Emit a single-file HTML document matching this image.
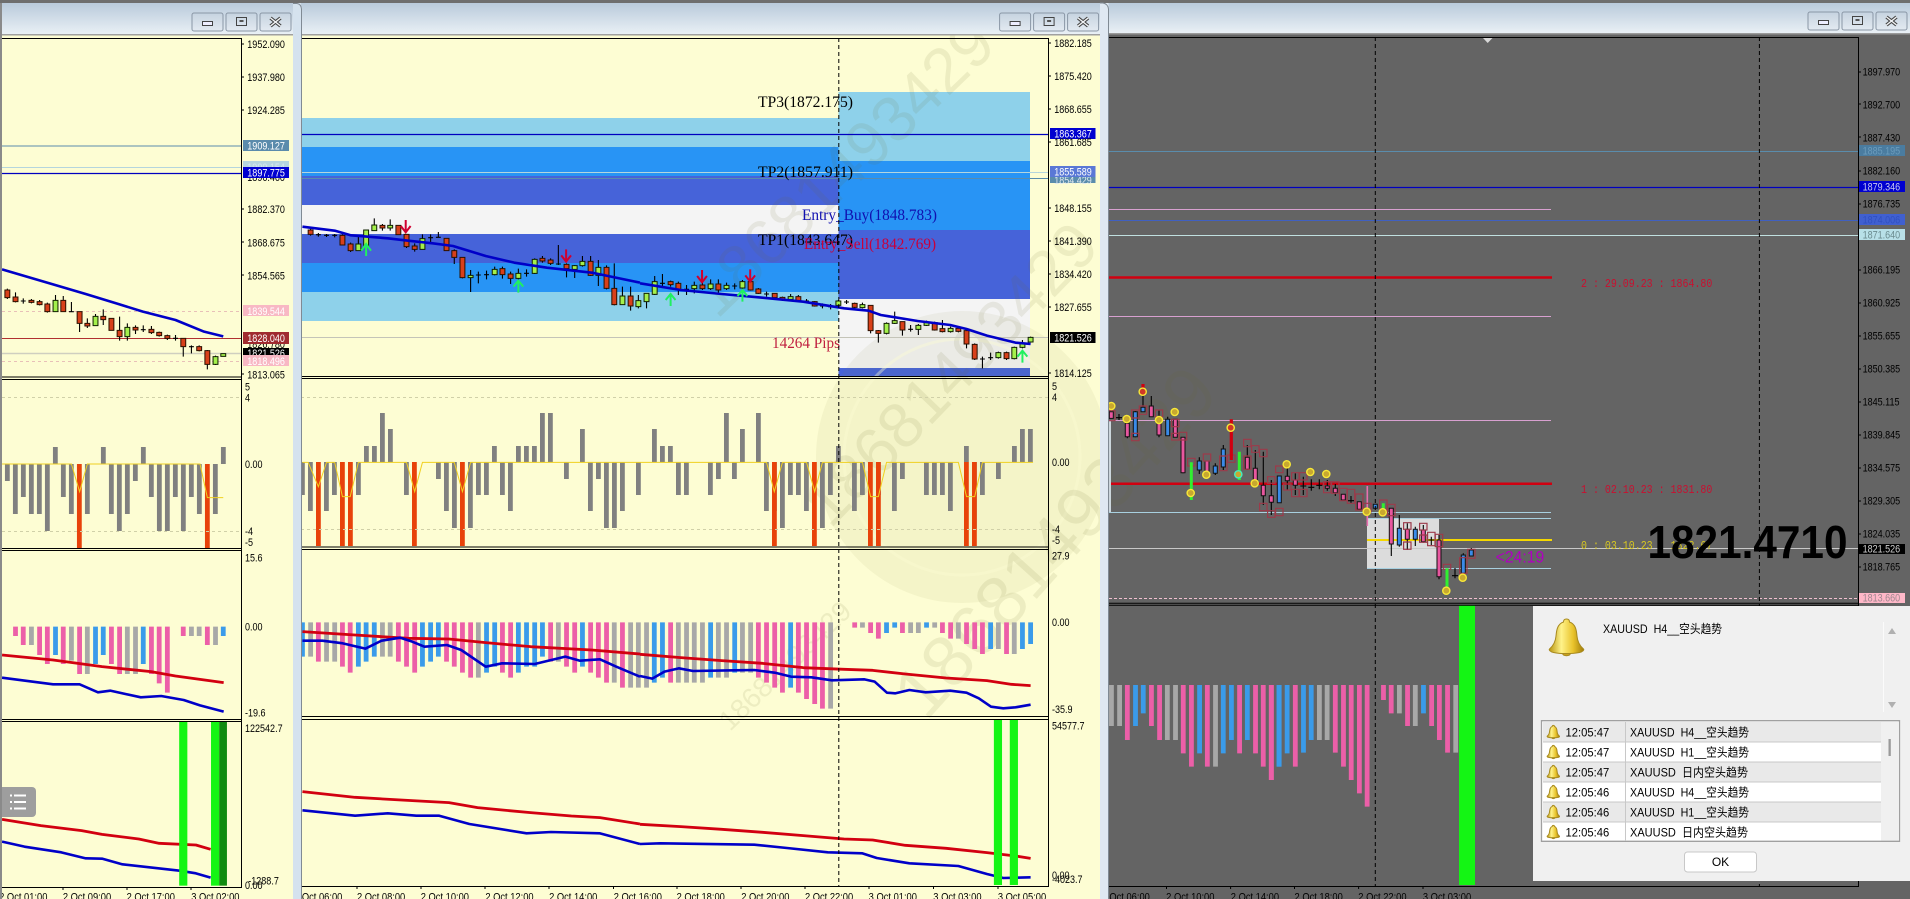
<!DOCTYPE html>
<html><head><meta charset="utf-8"><title>XAUUSD charts</title>
<style>
html,body{margin:0;padding:0;background:#646464;width:1910px;height:899px;overflow:hidden}
svg{display:block;font:11px "Liberation Sans","Noto Sans CJK SC",sans-serif}
svg path,svg line,svg polyline,svg rect{vector-effect:non-scaling-stroke}
.n{fill:none}
.w{fill:none;stroke:#000;stroke-width:1.1}
.rb{fill:#d8401a;stroke:#2a1000;stroke-width:1}
.gb{fill:#a4f04c;stroke:#102000;stroke-width:1}
.pb{fill:#e8579f;stroke:#111;stroke-width:1}
.bb{fill:#3a8be8;stroke:#111;stroke-width:1}
.box{fill:none;stroke:#9c3a4a;stroke-width:1.2}
.ma{fill:none;stroke:#0000c8;stroke-width:2.6;stroke-linejoin:round}
.re{fill:none;stroke:#d20010;stroke-width:2.8;stroke-linejoin:round}
.gr{fill:none;stroke:#808080;stroke-width:4.8}
.or{fill:none;stroke:#e8420a;stroke-width:4.8}
.hp{fill:none;stroke:#ec5fa8;stroke-width:4.8}
.hb{fill:none;stroke:#3a9bea;stroke-width:4.8}
.hg{fill:none;stroke:#a8a8a8;stroke-width:4.8}
.ye{fill:none;stroke:#f0d020;stroke-width:1}
.ag{fill:none;stroke:#20f060;stroke-width:2}
.ar{fill:none;stroke:#d00030;stroke-width:2}
.sm{fill:#c8a830;stroke:#f8e838;stroke-width:1.4}
.wm{font-family:"Liberation Sans",sans-serif;fill:#6c6c30;opacity:.1}
.tw{fill:#fff}
.se{font-family:"Liberation Serif",serif;font-size:16px}
.mo{font-family:"Liberation Mono",monospace;font-size:12px}
</style></head><body>
<svg width="1910" height="899" viewBox="0 0 1910 899" xmlns="http://www.w3.org/2000/svg">
<defs>
<linearGradient id="tg" x1="0" y1="0" x2="0" y2="1"><stop offset="0" stop-color="#b9cadb"/><stop offset="1" stop-color="#e9f0f5"/></linearGradient>
<linearGradient id="bg" x1="0" y1="0" x2="0" y2="1"><stop offset="0" stop-color="#c6d3e0"/><stop offset="1" stop-color="#e3eaf1"/></linearGradient>
<linearGradient id="gd" x1="0" y1="0" x2="1" y2="0"><stop offset="0" stop-color="#b89410"/><stop offset=".35" stop-color="#fff38a"/><stop offset=".7" stop-color="#e8c22a"/><stop offset="1" stop-color="#a07c0a"/></linearGradient>
<g id="btns">
<rect x="0" y="0" width="31" height="18" rx="2" fill="url(#bg)" stroke="#8a97a6"/>
<rect x="34" y="0" width="31" height="18" rx="2" fill="url(#bg)" stroke="#8a97a6"/>
<rect x="68" y="0" width="31" height="18" rx="2" fill="url(#bg)" stroke="#8a97a6"/>
<rect x="10.5" y="8.5" width="10" height="4" fill="#eef" stroke="#444"/>
<rect x="44.5" y="4.5" width="10" height="8" fill="none" stroke="#444"/><rect x="47.5" y="7" width="4" height="2" fill="#555"/>
<path d="M78.5 5L88.5 13M88.5 5L78.5 13" stroke="#444" stroke-width="3.4" fill="none"/>
<path d="M78.5 5L88.5 13M88.5 5L78.5 13" stroke="#f4f6f8" stroke-width="1.4" fill="none"/>
</g>
<g id="bell">
<path d="M19 1c2 0 3 1 3 3 6 2 7 8 7.500 14 .5 6 3 10 6.500 13 1 1-1 3-4 3.500-8 1.500-19 1.500-26 0-3-.5-5-2.500-4-3.500 3.500-3 6-7 6.500-13C9 12 10 6 16 4c0-2 1-3 3-3z" fill="url(#gd)" stroke="#a88a20"/>
<path d="M15 35.500c1 3 7 3 8 0z" fill="#c8a020" stroke="#a88a20"/>
</g>
</defs>

<!-- backgrounds -->
<rect x="0" y="0" width="1910" height="899" fill="#646464"/>
<rect x="1109" y="0" width="801" height="899" fill="#646464"/>
<rect x="0" y="0" width="301" height="899" fill="#fdfdd3"/>
<rect x="301" y="0" width="808" height="899" fill="#fdfdd3"/>

<!-- left window lines -->
<path d="M2 146H241" stroke="#5b8bac" stroke-width="1"/>
<path d="M2 167.500H241" stroke="#b5d5dd" stroke-width="1"/>
<path d="M2 173.500H241" stroke="#0000c0" stroke-width="1.300"/>
<path d="M2 311.500H241" stroke="#e8c0b8" stroke-dasharray="3 3"/>
<path d="M2 338.500H241" stroke="#b03030" stroke-width="1"/>
<path d="M2 353.500H241" stroke="#cfcfc0" stroke-width="1.500"/>
<path d="M2 361.500H241" stroke="#e8c0b8" stroke-dasharray="3 3"/>

<!-- mid fib zones -->
<rect x="301" y="118" width="537.500" height="29" fill="#8ed1ea"/>
<rect x="301" y="147" width="537.500" height="29" fill="#2894f5"/>
<rect x="301" y="176" width="537.500" height="29" fill="#4663d9"/>
<rect x="301" y="205" width="537.500" height="29" fill="#f4f4f4"/>
<rect x="301" y="234" width="537.500" height="29" fill="#4663d9"/>
<rect x="301" y="263" width="537.500" height="29" fill="#2894f5"/>
<rect x="301" y="292" width="537.500" height="29" fill="#8ed1ea"/>
<rect x="838.500" y="92" width="191.500" height="69" fill="#8ed1ea"/>
<rect x="838.500" y="161" width="191.500" height="69" fill="#2894f5"/>
<rect x="838.500" y="230" width="191.500" height="69" fill="#4663d9"/>
<rect x="838.500" y="299" width="191.500" height="69" fill="#f4f4f4"/>
<rect x="838.500" y="368" width="191.500" height="8" fill="#4663d9"/>

<!-- watermark -->
<ellipse cx="962" cy="457" rx="146" ry="146" fill="#80803c" opacity=".07"/>
<ellipse cx="962" cy="457" rx="118" ry="118" fill="none" stroke="#fdfdd3" stroke-width="3" opacity=".4"/>
<text class="wm" font-size="64" transform="translate(717 320) rotate(-44)">18681493429</text>
<text class="wm" font-size="64" transform="translate(830 530) rotate(-46)">18681493429</text>
<text class="wm" font-size="72" transform="translate(926 722) rotate(-48)">18681493429</text>
<text class="wm" font-size="28" transform="translate(730 732) rotate(-44)">18681493429</text>

<!-- mid horizontal lines -->
<path d="M301 134.500H1048" stroke="#0000c0" stroke-width="1.200"/>
<path d="M301 172.500H1048" stroke="#b5d5dd" stroke-width="1"/>
<path d="M301 178.500H1048" stroke="#5a8cac" stroke-width="1"/>
<path d="M301 337.500H1048" stroke="#c4c4b8" stroke-width="1"/>

<!-- mid text objects -->
<text class="se" x="758" y="107" textLength="95" lengthAdjust="spacingAndGlyphs">TP3(1872.175)</text>
<text class="se" x="758" y="177" textLength="95" lengthAdjust="spacingAndGlyphs">TP2(1857.911)</text>
<text class="se" x="758" y="245" textLength="95" lengthAdjust="spacingAndGlyphs">TP1(1843.647)</text>
<text class="se" x="802" y="220" textLength="135" lengthAdjust="spacingAndGlyphs" fill="#1010b0">Entry_Buy(1848.783)</text>
<text class="se" x="804" y="249" textLength="132" lengthAdjust="spacingAndGlyphs" fill="#c8003c">Entry_Sell(1842.769)</text>
<text class="se" x="772" y="348" textLength="68" lengthAdjust="spacingAndGlyphs" fill="#c02040">14264 Pips</text>

<!-- right window lines -->
<path d="M1109 151.500H1858" stroke="#5a8cac"/>
<path d="M1109 187.500H1858" stroke="#0000c0" stroke-width="1.300"/>
<path d="M1109 209.500H1551" stroke="#d8a0d0"/>
<path d="M1109 220.500H1858" stroke="#4060c0"/>
<path d="M1109 235.500H1858" stroke="#c0e0e0"/>
<path d="M1109 277.500H1552" stroke="#d00010" stroke-width="2.500"/>
<path d="M1109 316.500H1551" stroke="#d8a0d0"/>
<path d="M1109 420.500H1551" stroke="#d8a0d0"/>
<rect x="1367" y="519" width="72" height="49.500" fill="#dcdcdc"/>
<path d="M1109 483.700H1552" stroke="#d00010" stroke-width="2.500"/>
<path d="M1110 421V512" stroke="#ccd6dc" stroke-width="2" fill="none"/>
<path d="M1109 512.500H1551M1367 518.500H1551M1367 568.500H1551" stroke="#a8d0e0" fill="none"/>
<path d="M1367 540H1552" stroke="#f5d800" stroke-width="2"/>
<path d="M1109 548.500H1858" stroke="#c8c8c8"/>
<path d="M1109 598.500H1858" stroke="#f0c0d0" stroke-dasharray="3 2"/>
<path d="M1367.300 486V526" stroke="#e870b0" stroke-width="1.600"/>
<path d="M1483 38H1492.500L1487.700 43z" fill="#d8d8d8"/>

<!-- left candles -->
<g transform="scale(.40816 .33333)">
<path class="w" d="M18 866V897M38 877V907M57 895V911M51 903h12M77 897V910M97 900V916M116 908V938M136 885V935M155 888V935M175 906V935M169 935h12M195 935V996M214 955V984M234 942V977M253 928V975M273 955V991M293 950V1022M312 970V1022M332 976V1002M351 976V996M345 989h12M371 978V1002M390 995V1010M410 1004V1020M430 1005V1022M424 1015h12M449 1015V1070M469 1036V1060M463 1040h12M488 1036V1054M508 1050V1108M528 1067V1095"/>
<path class="rb" d="M12 870h12v23h-12zM32 891h12v14h-12zM71 901h12v6h-12zM91 905h12v9h-12zM110 912h12v23h-12zM149 901h12v34h-12zM189 935h12v35h-12zM208 970h12v8h-12zM247 949h12v10h-12zM267 955h12v36h-12zM287 991h12v19h-12zM326 982h12v8h-12zM365 988h12v10h-12zM384 997h12v10h-12zM404 1007h12v8h-12zM443 1015h12v25h-12zM482 1040h12v12h-12zM502 1052h12v41h-12z"/>
<path class="gb" d="M130 901h12v34h-12zM228 949h12v28h-12zM306 982h12v28h-12zM522 1070h12v23h-12zM541 1061h12v8h-12z"/>
<polyline class="ma" points="5,808 130,853 210,882 290,912 350,935 430,960 500,995 547,1009"/>
<!-- mid candles part 1 -->
<path class="w" d="M761 686V707M780 699V710M774 704h12M800 702V711M794 706h12M820 702V712M814 706h12M839 703V735M859 728V756M878 705V752M897 690V768M917 655V692M937 672V692M956 658V692M976 676V704M996 703V744M1016 730V755M1035 703V748M1055 703V730M1049 713h12M1074 696V712M1068 712h12M1094 715V752M1113 748V792M1133 772V835M1153 810V876M1172 815V850M1166 825h12M1192 812V838M1186 824h12M1212 800V826M1231 800V836M1251 815V852M1270 806V838M1290 808V830M1284 820h12M1310 775V822M1329 768V788M1349 775V795M1368 735V795M1362 792h12M1388 790V832M1408 795V834M1427 768V800M1447 768V828M1466 780V858M1486 796V868M1505 790V916M1525 860V914M1545 860V932M1564 885V925"/>
<path class="rb" d="M755 690h12v13h-12zM833 706h12v29h-12zM853 732h12v20h-12zM931 676h12v8h-12zM970 676h12v28h-12zM990 703h12v37h-12zM1010 738h12v10h-12zM1088 715h12v37h-12zM1107 752h12v20h-12zM1127 772h12v61h-12zM1225 806h12v18h-12zM1245 822h12v13h-12zM1323 775h12v8h-12zM1343 780h12v10h-12zM1382 793h12v13h-12zM1441 784h12v42h-12zM1480 802h12v63h-12zM1499 865h12v49h-12zM1539 888h12v30h-12z"/>
<path class="gb" d="M872 732h12v20h-12zM891 690h12v48h-12zM911 675h12v17h-12zM950 676h12v8h-12zM1029 716h12v32h-12zM1147 826h12v7h-12zM1206 808h12v16h-12zM1264 820h12v15h-12zM1304 778h12v42h-12zM1402 797h12v11h-12zM1421 784h12v13h-12zM1460 802h12v24h-12zM1519 888h12v26h-12zM1558 902h12v18h-12z"/>
<polyline class="ma" points="741,680 820,692 860,706 950,715 1000,722 1060,730 1110,738 1190,768 1260,788 1340,803 1450,818 1568,848"/>
<path class="ag" d="M897 768V735M885 752L897 732L909 752M1270 878V845M1258 860L1270 842L1282 860"/>
<path class="ar" d="M994 660V695M982 678L994 697L1006 678M1387 748V783M1375 766L1387 785L1399 766"/>
</g>
<g transform="translate(640 0) scale(.40816 .33333)">
<path class="w" d="M16 880V925M36 828V885M55 822V858M49 850h12M75 842V860M94 845V885M114 855V885M108 868h12M133 845V880M153 845V870M173 838V870M192 838V882M212 848V870M232 850V868M226 858h12M251 840V870M271 842V872M290 864V882M310 875V890M304 882h12M330 880V895M349 890V903M369 882V902M388 885V905M408 897V910M402 903h12M428 903V920M447 910V925M441 918h12M467 912V928M461 920h12M486 900V920M506 900V912M500 906h12M526 908V925M545 908V925M565 916V1000M584 990V1028M604 967V1003M624 935V972M643 965V1007M663 975V995M657 988h12M682 972V1005M702 962V978M722 965V992M741 960V997M761 980V998M780 982V997M800 985V1045M820 1030V1080M839 1070V1105M833 1077h12M859 1058V1080M853 1073h12M878 1055V1076M898 1055V1080M917 1040V1078M937 1020V1045M957 1010V1028"/>
<path class="gb" d="M10 880h12v25h-12zM30 845h12v38h-12zM127 856h12v10h-12zM167 852h12v14h-12zM206 856h12v10h-12zM245 845h12v19h-12zM363 890h12v8h-12zM480 903h12v13h-12zM539 914h12v9h-12zM598 970h12v30h-12zM618 962h12v8h-12zM676 976h12v12h-12zM696 968h12v8h-12zM755 985h12v10h-12zM872 1058h12v15h-12zM911 1042h12v34h-12zM931 1030h12v12h-12zM951 1012h12v14h-12z"/>
<path class="rb" d="M69 845h12v9h-12zM88 850h12v20h-12zM147 855h12v11h-12zM186 852h12v18h-12zM265 845h12v25h-12zM284 867h12v13h-12zM324 880h12v13h-12zM343 892h12v8h-12zM382 890h12v12h-12zM422 905h12v13h-12zM520 910h12v12h-12zM559 916h12v76h-12zM578 992h12v8h-12zM637 965h12v25h-12zM716 968h12v22h-12zM735 986h12v9h-12zM774 985h12v9h-12zM794 992h12v40h-12zM814 1033h12v44h-12zM892 1058h12v18h-12z"/>
<polyline class="ma" points="0,850 100,870 200,882 300,893 400,905 500,925 560,932 590,945 680,963 760,975 800,987 850,1007 920,1028 957,1032"/>
<path class="ag" d="M75 918V885M63 900L75 882L87 900M251 905V872M239 888L251 870L263 888M937 1088V1055M925 1070L937 1052L949 1070"/>
<path class="ar" d="M152 810V845M140 828L152 847L164 828M270 808V843M258 826L270 845L282 826"/>
</g>

<!-- right window candles -->
<g>
<path class="w" d="M1116 417.700h6M1119 414V420M1127.300 423V438.300M1135.300 411V437.300M1143 396V411.700M1151.300 396V416.700M1159 410V437.300M1167.700 416.700V435.700M1175.300 419V437.300M1183 437V473.300M1199.300 457.300V474M1207 461V472M1215.300 463.300V475M1223.300 445V470M1247.300 445V470M1255.300 450V480M1263.300 451.700V505M1271.300 480V515M1279.300 476V503M1287.300 468V490M1295.300 473.300V495M1303.300 476.700V495M1300.300 486h6M1311.300 479.300V490.700M1308.300 487.300h6M1319.300 479.300V489.300M1316.300 485.300h6M1327.300 480V490.700M1335.300 484V496M1351 496V503.300M1348 500.700h6M1391.300 508V556M1399.300 515V546.700M1407.300 523.300V550M1415.300 526.700V546M1423.300 525V542.700M1431.300 536.700V545M1428.300 540h6M1439 535V579.300M1455 568V578.300M1452 575.700h6M1463.300 553.300V574M1471.300 548V556"/>
<path class="pb" d="M1109.300 411.700h4v6.700h-4zM1125.300 423.300h4v13.400h-4zM1149.300 406h4v10.700h-4zM1157 423.300h4v11.700h-4zM1173.300 419.300h4v18h-4zM1181 437.300h4v35.400h-4zM1205 461h4v10.700h-4zM1245.300 457.300h4v12h-4zM1253.300 468.300h4v11.700h-4zM1261.300 485.300h4v10.400h-4zM1269.300 495.700h4v6.600h-4zM1285.300 476.300h4v4.400h-4zM1293.300 480h4v5.300h-4zM1325.300 486h4v2.300h-4zM1333.300 488.300h4v4.400h-4zM1341.300 494.300h4v5.700h-4zM1357.300 501.700h4v7.600h-4zM1389.300 508.300h4v35.700h-4zM1405.300 529.300h4v10h-4zM1421.300 530h4v11.700h-4zM1437 540h4v36.700h-4z"/>
<path class="bb" d="M1133.300 411.700h4v25h-4zM1141 407.300h4v4.400h-4zM1165.700 419.300h4v16.400h-4zM1197.300 461h4v9h-4zM1213.300 466h4v7.300h-4zM1221.300 449h4v18h-4zM1277.300 476h4v26.700h-4zM1373.300 504.300h4v4h-4zM1397.300 528.300h4v16.700h-4zM1413.300 529.300h4v10h-4zM1461.300 555h4v18.300h-4zM1469.300 550h4v6h-4z"/>
<path class="box" d="M1107.600 410.700h7.400v10h-7.400zM1131.600 410h7.400v8h-7.400zM1131.600 433.300h7.400v7.400h-7.400zM1139.300 406h7.400v8.300h-7.400zM1155.300 410h7.400v6.700h-7.400zM1171.600 419.300h7.400v7.400h-7.400zM1171.600 433.300h7.400v6.700h-7.400zM1179.300 432.300h7.400v7.700h-7.400zM1187.600 458.300h7.400v7.700h-7.400zM1203.300 454h7.400v7h-7.400zM1219.600 456h7.400v14.700h-7.400zM1227.600 455h7.400v7.300h-7.400zM1243.600 439.300h7.400v7.400h-7.400zM1243.600 456h7.400v13.300h-7.400zM1251.600 445.700h7.400v6.600h-7.400zM1259.600 449.300h7.400v7.400h-7.400zM1259.600 503.300h7.400v7.400h-7.400zM1267.600 476.700h7.400v6.600h-7.400zM1267.600 510.700h7.400v6.600h-7.400zM1275.600 466h7.400v6.700h-7.400zM1275.600 508.300h7.400v7.400h-7.400zM1283.600 484h7.400v6h-7.400zM1291.600 472.700h7.400v7.300h-7.400zM1291.600 489.300h7.400v7.400h-7.400zM1299.600 472.700h7.400v7.300h-7.400zM1299.600 489.300h7.400v7.400h-7.400zM1323.600 481.700h7.400v11h-7.400zM1331.600 481.700h7.400v11.600h-7.400zM1339.600 488.300h7.400v12.400h-7.400zM1347.300 489.300h7.400v14h-7.400zM1355.600 494h7.400v16h-7.400zM1363.600 503.300h7.400v8.700h-7.400zM1379.600 500h7.400v10h-7.400zM1387.600 504.300h7.400v11.400h-7.400zM1403.600 522.700h7.400v6.600h-7.400zM1403.600 542h7.400v7.300h-7.400zM1419.600 523.300h7.400v6.700h-7.400zM1419.600 535h7.400v7.300h-7.400zM1427.600 532.300h7.400v13.400h-7.400zM1435.300 534.300h7.400v12.400h-7.400zM1443.300 564.300h7.400v5h-7.400zM1459.600 557.700h7.400v15.600h-7.400zM1467.600 549.300h7.400v9h-7.400z"/>
<path d="M1191.300 462.300V500M1239.300 451.700V480M1383.300 503.300V512M1447 568.300V588.300" stroke="#30f030" stroke-width="3" fill="none"/>
<path d="M1231.300 419.300V460M1143 384V392" stroke="#d00010" stroke-width="3.200" fill="none"/>
<circle class="sm" cx="1111.300" cy="406" r="3.600"/><circle class="sm" cx="1126.700" cy="419" r="3.600"/><circle class="sm" cx="1142.700" cy="391.700" r="3.600" style="fill:#d03828"/><circle class="sm" cx="1159" cy="420" r="3.600"/><circle class="sm" cx="1174.700" cy="412" r="3.600"/><circle class="sm" cx="1230.700" cy="427.700" r="3.600" style="fill:#d03828"/><circle class="sm" cx="1190.700" cy="493" r="3.600"/><circle class="sm" cx="1206.300" cy="474.700" r="3.600"/><circle class="sm" cx="1238.300" cy="474.300" r="3.600" style="stroke:#40f0c0"/><circle class="sm" cx="1254.700" cy="483.300" r="3.600"/><circle class="sm" cx="1286.700" cy="464.300" r="3.600"/><circle class="sm" cx="1310.300" cy="472" r="3.600"/><circle class="sm" cx="1326.300" cy="474" r="3.600"/><circle class="sm" cx="1366.700" cy="511.700" r="3.600"/><circle class="sm" cx="1382.700" cy="512.300" r="3.600"/><circle class="sm" cx="1446.300" cy="590.700" r="3.600"/><circle class="sm" cx="1462.700" cy="577.700" r="3.600"/>
</g>

<!-- left pane 2 -->
<path class="gr" d="M7.350 464V481M15.350 464V514M23.350 464V497M31.350 464V514M39.350 464V514M47.350 464V531M55.350 464V447M63.350 464V497M71.350 464V514M87.350 464V514M103.350 464V447M111.350 464V514M119.350 464V531M127.350 464V514M135.350 464V481M143.350 464V447M151.350 464V497M159.350 464V531M167.350 464V531M175.350 464V497M183.350 464V531M191.350 464V497M199.350 464V514M215.350 464V514M223.350 464V447"/>
<path class="or" d="M79.350 464V548M207.350 464V548"/>
<path d="M2 397.500H241M2 531.500H241" stroke="#d0d0a8" stroke-dasharray="3 3" fill="none"/>
<g transform="translate(0 450) scale(.40816 .33333)"><path class="ye" d="M5 42H175L195 125L214 42H490L508 143H547"/>
<path class="hp" d="M38 530V558M57 530V585M97 530V615M116 530V642M155 530V642M195 530V672M273 530V642M293 530V672M371 530V672M390 530V700M410 530V728M449 530V558M508 530V585"/>
<path class="hb" d="M136 530V615M234 530V642M253 530V615M351 530V642M547 530V558"/>
<path class="hg" d="M77 530V585M175 530V632M214 530V672M312 530V672M332 530V672M469 530V558M488 530V558M528 530V585"/>
<polyline class="re" points="5,615 130,630 250,650 370,665 430,678 548,698"/>
<polyline class="ma" points="5,683 130,703 195,703 240,727 270,722 345,742 395,738 450,750 490,766 548,785"/>
<polyline class="re" points="5,1108 100,1127 200,1142 250,1153 340,1167 390,1180 480,1185 516,1198"/>
<polyline class="ma" points="5,1175 60,1190 150,1207 210,1225 250,1226 300,1243 440,1262 480,1270 516,1283"/>
<rect x="439" y="815" width="20" height="492" fill="#14f514"/><rect x="517" y="815" width="20" height="492" fill="#14f514"/><rect x="537" y="815" width="19" height="492" fill="#108a10"/>
</g>

<!-- mid pane 2 -->
<path class="gr" d="M302.400 462V495M310.400 462V511M326.400 462V511M334.400 462V495M358.400 462V495M366.400 462V446M374.400 462V446M382.400 462V413M390.400 462V429M406.400 462V495M438.400 462V479M446.400 462V511M454.400 462V528M470.400 462V528M478.400 462V495M486.400 462V495M494.400 462V446M502.400 462V495M510.400 462V511M518.400 462V446M526.400 462V446M534.400 462V446M542.400 462V413M550.400 462V413M566.400 462V479M582.400 462V429M590.400 462V511M598.400 462V479M606.400 462V528M614.400 462V528M622.400 462V511M638.400 462V495M654.400 462V429M662.400 462V446M670.400 462V446M678.400 462V495M686.400 462V495M710.400 462V495M718.400 462V479M726.400 462V413M734.400 462V479M742.400 462V429M758.400 462V413M766.400 462V511M774.400 462V511M782.400 462V528M790.400 462V495M798.400 462V495M806.400 462V511M822.400 462V528M830.400 462V495M838.400 462V446M854.400 462V511M862.400 462V495M878.400 462V495M894.400 462V511M902.400 462V479M926.400 462V495M934.400 462V495M942.400 462V495M950.400 462V511M966.400 462V446M974.400 462V528M982.400 462V495M998.400 462V479M1014.400 462V446M1022.400 462V429M1030.400 462V429"/>
<path class="or" d="M318.400 462V546M342.400 462V546M350.400 462V546M414.400 462V546M462.400 462V546M774.400 462V546M814.400 462V546M870.400 462V546M878.400 462V546M966.400 462V546M974.400 462V546"/>
<path d="M301 397.500H1048M301 529.500H1048" stroke="#d0d0a8" stroke-dasharray="3 3" fill="none"/>
<g transform="translate(0 450) scale(.40816 .33333)">
<path class="ye" d="M741 37H755L780 110L800 37H820L839 140H858L878 37H996L1016 125L1035 37H1113L1133 125L1153 37H1568"/>
<path class="hb" d="M741 517V620M878 517V650M897 517V635M917 517V620M1035 517V650M1055 517V635M1074 517V620M1192 517V668M1212 517V650M1270 517V668M1290 517V650M1310 517V650M1329 517V620M1427 517V650"/>
<path class="hg" d="M761 517V620M800 517V635M820 517V635M937 517V620M956 517V620M1172 517V683M1368 517V635M1505 517V698M1545 517V713M1564 517V713"/>
<path class="hp" d="M780 517V635M839 517V650M858 517V668M976 517V635M996 517V650M1016 517V668M1094 517V635M1113 517V650M1133 517V668M1153 517V683M1231 517V668M1251 517V683M1349 517V635M1388 517V650M1408 517V668M1447 517V668M1466 517V683M1486 517V698M1525 517V713"/>
<polyline class="re" points="741,545 870,555 1000,565 1100,567 1190,578 1300,590 1450,600 1568,612"/>
<polyline class="ma" points="741,572 790,572 840,580 895,596 935,572 980,563 1010,575 1040,590 1095,585 1130,600 1190,650 1230,640 1310,642 1385,620 1420,632 1470,628 1510,650 1568,680"/>
<polyline class="re" points="741,1025 870,1042 1010,1052 1100,1058 1170,1073 1300,1088 1400,1098 1470,1103 1568,1122"/>
<polyline class="ma" points="741,1081 870,1097 950,1090 1020,1097 1075,1097 1150,1122 1290,1150 1350,1146 1470,1150 1568,1182"/>
</g>
<g transform="translate(640 450) scale(.40816 .33333)">
<path class="ye" d="M0 37H310L329 125L349 37H408L428 125L447 37H545L565 140H584L604 37H780L800 140H820L839 37H963"/>
<path class="hb" d="M35 517V698M55 517V683M173 517V683M232 517V668M369 517V713M604 517V549M624 517V533M702 517V533M859 517V597M937 517V597M957 517V582"/>
<path class="hg" d="M16 517V713M94 517V698M114 517V698M133 517V698M153 517V698M192 517V683M212 517V683M251 517V668M271 517V668M467 517V776M545 517V533M663 517V549M682 517V549M722 517V533M780 517V566M878 517V597M917 517V612"/>
<path class="hp" d="M75 517V698M290 517V683M310 517V698M330 517V713M349 517V728M388 517V728M408 517V747M428 517V762M447 517V776M526 517V533M565 517V549M584 517V566M643 517V549M741 517V549M761 517V566M800 517V582M820 517V597M839 517V612M898 517V612"/>
<polyline class="re" points="0,613 100,623 200,632 300,640 400,653 500,658 570,661 650,672 750,684 850,692 910,703 957,707"/>
<polyline class="ma" points="0,678 30,686 60,665 95,655 130,663 230,661 280,660 330,668 370,680 420,682 470,691 550,688 575,695 605,728 625,730 660,720 700,727 760,722 800,728 830,745 860,770 890,775 920,772 957,764"/>
<polyline class="re" points="0,1123 100,1130 200,1138 300,1147 400,1157 500,1167 570,1170 650,1186 750,1195 850,1208 920,1218 957,1225"/>
<polyline class="ma" points="0,1182 50,1180 280,1184 360,1194 460,1207 545,1210 580,1224 660,1240 780,1248 850,1272 890,1284 957,1282"/>
<rect x="867" y="808" width="20" height="497" fill="#14f514"/><rect x="906" y="808" width="20" height="497" fill="#14f514"/>
<!-- right lower hist -->
<path class="hg" d="M1155 705V828M1175 705V828M1292 705V870M1312 705V870M1410 705V950"/>
<path class="hp" d="M1194 705V870M1253 705V828M1273 705V870M1331 705V910M1351 705V950M1390 705V950M1469 705V910M1508 705V910M1527 705V950M1547 705V990"/>
<path class="hb" d="M1214 705V828M1233 705V790M1371 705V910M1429 705V910M1449 705V870M1488 705V870M1566 705V950"/>
</g>
<g transform="translate(1270 450) scale(.40816 .33333)">
<path class="hp" d="M3 705V990M62 705V950M160 705V908M180 705V950M199 705V990M219 705V1030M238 705V1070M278 705V750M297 705V790M337 705V828M396 705V828M415 705V870M435 705V908"/>
<path class="hb" d="M22 705V950M42 705V910M82 705V908M101 705V870M376 705V790"/>
<path class="hg" d="M121 705V870M140 705V870M317 705V790M356 705V828M455 705V908"/>
</g>
<rect x="1459" y="605" width="16" height="280" fill="#14f514"/>

<!-- vertical dashed lines -->
<path d="M838.800 38V886M1375.300 37V886M1759.400 37V886" stroke="#000" stroke-dasharray="4 3" fill="none"/>

<!-- right window texts -->
<text class="mo" fill="#c81030" transform="translate(1581 287) scale(.83 1)" xml:space="preserve">2 : 29.09.23 : 1864.80</text>
<text class="mo" fill="#c81030" transform="translate(1581 493) scale(.83 1)" xml:space="preserve">1 : 02.10.23 : 1831.80</text>
<text class="mo" fill="#d8c820" transform="translate(1581 549) scale(.83 1)" xml:space="preserve">0 : 03.10.23 : 1822.67</text>
<text x="1647.500" y="558" font-size="46" font-weight="700" fill="#000" textLength="200" lengthAdjust="spacingAndGlyphs">1821.4710</text>
<text x="1495.700" y="562.700" font-size="17" fill="#b000c0" textLength="48.500" lengthAdjust="spacingAndGlyphs">&lt;24:19</text>

<!-- pane frames -->
<path d="M2 38.500H241M2 377H241M2 379.500H241M2 548.500H241M2 550.500H241M2 719.500H241M2 721.500H241M2 887.500H241M241.500 38V888" stroke="#000" stroke-width="1" fill="none"/>
<path d="M301 38.500H1048M301 376.500H1048M301 378.500H1048M301 547H1048M301 549.500H1048M301 716.500H1048M301 719.500H1048M301 886.500H1048M1048.500 38V887" stroke="#000" stroke-width="1" fill="none"/>
<path d="M1109 37.500H1858M1109 603.300H1858M1109 605.300H1858M1109 886.500H1858M1858.500 37V887" stroke="#000" stroke-width="1" fill="none"/>

<!-- ticks -->
<path d="M241 44h3M241 77h3M241 110h3M241 209h3M241 242h3M241 275h3M241 374h3M1048 43h3M1048 76h3M1048 109h3M1048 142h3M1048 208h3M1048 241h3M1048 274h3M1048 307h3M1048 373h3M1858 72h3M1858 104h3M1858 137h3M1858 171h3M1858 204h3M1858 270h3M1858 303h3M1858 336h3M1858 369h3M1858 402h3M1858 435h3M1858 468h3M1858 501h3M1858 534h3M1858 567h3M63 887v3M127 887v3M191 887v3M357 886v3M421 886v3M485 886v3M549 886v3M613.500 886v3M677 886v3M741 886v3M805 886v3M869 886v3M933.500 886v3M998 886v3M1166.500 886v3M1230.600 886v3M1294.500 886v3M1358.600 886v3M1423 886v3" stroke="#000" fill="none"/>

<!-- tags -->
<rect x="243" y="140" width="46" height="11" fill="#5b8bac"/>
<rect x="243" y="161" width="46" height="6" fill="#b5d5e0"/>
<g transform="translate(247.300 0) scale(.82 1)"><text y="171" fill="#d8e8ee">1900.154</text></g>
<g transform="translate(247.300 0) scale(.82 1)"><text y="181">1896.460</text></g>
<rect x="243" y="167" width="46" height="11" fill="#0000d0"/>
<rect x="243" y="305" width="46" height="11" fill="#f8b8c4"/>
<g transform="translate(247.300 0) scale(.82 1)"><text y="348">1826.780</text></g>
<rect x="243" y="332" width="46" height="12" fill="#a02a30"/>
<rect x="243" y="348" width="46" height="8" fill="#000"/>
<g transform="translate(247.300 0) scale(.82 1)"><text y="357" class="tw">1821.526</text></g>
<rect x="243" y="355" width="46" height="11" fill="#f8b8c4"/>
<rect x="1050" y="128" width="45.500" height="11" fill="#0000d0"/>
<rect x="1050" y="177" width="45.500" height="6" fill="#5a8cac"/>
<g transform="translate(1054.200 0) scale(.82 1)"><text y="184" fill="#dfe8ee">1854.429</text></g>
<rect x="1050" y="166" width="45.500" height="11" fill="#5a78d6"/>
<rect x="1050" y="332" width="45.500" height="11" fill="#000"/>
<rect x="1859" y="145" width="46" height="11" fill="#4a7ca0"/>
<rect x="1859" y="181" width="46" height="11" fill="#0000d0"/>
<rect x="1859" y="214" width="46" height="11" fill="#4060d0"/>
<rect x="1859" y="229" width="46" height="11" fill="#b8e0e8"/>
<rect x="1859" y="544" width="46" height="10" fill="#000"/>
<rect x="1859" y="593" width="46" height="10" fill="#ffb8c8"/>

<!-- axis text: left -->
<g transform="translate(247.300 0) scale(.82 1)">
<text y="48">1952.090</text><text y="81">1937.980</text><text y="114">1924.285</text>
<text y="149.500" class="tw">1909.127</text><text y="176.500" class="tw">1897.775</text>
<text y="213">1882.370</text><text y="246.500">1868.675</text><text y="279.500">1854.565</text>
<text y="315" class="tw">1839.544</text><text y="342" class="tw">1828.040</text><text y="365" class="tw">1818.496</text>
<text y="378.500">1813.065</text>
</g>
<g transform="translate(245 0) scale(.82 1)">
<text y="390.500">5</text><text y="401.500">4</text><text y="468">0.00</text><text y="535">-4</text><text y="546">-5</text>
<text y="561.700">15.6</text><text y="630.700">0.00</text><text y="716.700">-19.6</text><text y="732">122542.7</text>
<text y="889">0.00</text><text y="884.700" transform="translate(4 0)">-1288.7</text>
</g>
<!-- axis text: mid -->
<g transform="translate(1054.200 0) scale(.82 1)">
<text y="47">1882.185</text><text y="80">1875.420</text><text y="113">1868.655</text>
<text y="146">1861.685</text><text y="137.500" class="tw">1863.367</text><text y="175.500" class="tw">1855.589</text>
<text y="212">1848.155</text><text y="245">1841.390</text><text y="278">1834.420</text><text y="311">1827.655</text>
<text y="341.500" class="tw">1821.526</text><text y="377">1814.125</text>
</g>
<g transform="translate(1052 0) scale(.82 1)">
<text y="390">5</text><text y="401">4</text><text y="466">0.00</text><text y="533">-4</text><text y="544">-5</text>
<text y="559.700">27.9</text><text y="626">0.00</text><text y="713">-35.9</text><text y="729.700">54577.7</text>
<text y="879">0.00</text><text y="883">-4023.7</text>
</g>
<!-- axis text: right -->
<g transform="translate(1862.600 0) scale(.82 1)">
<text y="75.700">1897.970</text><text y="108.500">1892.700</text><text y="141.500">1887.430</text>
<text y="154.500" fill="#6c9cbc">1885.195</text><text y="174.700">1882.160</text><text y="190.500" fill="#c8c8f0">1879.346</text>
<text y="207.700">1876.735</text><text y="223.500" fill="#3050c0">1874.006</text><text y="238.500" fill="#6c8c90">1871.640</text>
<text y="273.700">1866.195</text><text y="306.700">1860.925</text><text y="339.700">1855.655</text>
<text y="372.700">1850.385</text><text y="405.700">1845.115</text><text y="438.700">1839.845</text>
<text y="471.700">1834.575</text><text y="504.700">1829.305</text><text y="537.700">1824.035</text>
<text y="552.500" class="tw" opacity=".8">1821.526</text><text y="570.700">1818.765</text><text y="601.500" fill="#a08890">1813.660</text>
</g>
<!-- time axis -->
<g transform="scale(.85 1)">
<text x="-1" y="900.500">2 Oct 01:00</text><text x="74" y="900.500">2 Oct 09:00</text><text x="149" y="900.500">2 Oct 17:00</text><text x="225" y="900.500">3 Oct 02:00</text>
<text x="346" y="900.500">2 Oct 06:00</text><text x="420" y="900.500">2 Oct 08:00</text><text x="495" y="900.500">2 Oct 10:00</text><text x="571" y="900.500">2 Oct 12:00</text><text x="646" y="900.500">2 Oct 14:00</text><text x="722" y="900.500">2 Oct 16:00</text><text x="796" y="900.500">2 Oct 18:00</text><text x="872" y="900.500">2 Oct 20:00</text><text x="947" y="900.500">2 Oct 22:00</text><text x="1022" y="900.500">3 Oct 01:00</text><text x="1098" y="900.500">3 Oct 03:00</text><text x="1174" y="900.500">3 Oct 05:00</text>
<text x="1296" y="900.500">2 Oct 06:00</text><text x="1372" y="900.500">2 Oct 10:00</text><text x="1448" y="900.500">2 Oct 14:00</text><text x="1523" y="900.500">2 Oct 18:00</text><text x="1598" y="900.500">2 Oct 22:00</text><text x="1674" y="900.500">3 Oct 03:00</text>
</g>

<!-- side list button -->
<rect x="-4" y="787" width="40" height="30" rx="4" fill="#9e9e9e"/>
<path d="M14 795.500H26M14 802H26M14 808.500H26M10 795.500h2M10 802h2M10 808.500h2" stroke="#fff" stroke-width="2" fill="none"/>

<!-- window chrome -->
<rect x="0" y="0" width="1910" height="3" fill="#6e6e6e"/>
<rect x="1108" y="3" width="802" height="30" fill="url(#tg)"/>
<rect x="1108" y="33" width="802" height="1.500" fill="#9a9a9a"/>
<rect x="1108" y="34.500" width="802" height="2.500" fill="#646464"/>
<rect x="301" y="3" width="808" height="31" fill="url(#tg)"/>
<rect x="301" y="34" width="800" height="1.500" fill="#a0a0a0"/>
<rect x="1100" y="3" width="8.500" height="896" fill="#dfe8f2"/>
<path d="M1100 3H1103Q1108 4 1108.500 9V899" stroke="#808a94" fill="none"/>
<rect x="0" y="3" width="293" height="31" fill="url(#tg)"/>
<rect x="0" y="34" width="293" height="1.500" fill="#a0a0a0"/>
<rect x="293" y="3" width="8" height="896" fill="#d5e2ee"/>
<path d="M293 3.500H297Q301 4 301.500 9V899" stroke="#808a94" fill="none"/>
<rect x="0" y="3" width="2" height="896" fill="#8a8a8a"/>
<use href="#btns" x="192" y="13"/>
<use href="#btns" x="999.600" y="13"/>
<use href="#btns" x="1808" y="12"/>

<!-- alert dialog -->
<rect x="1533" y="606" width="377" height="275" fill="#f0f0f0"/>
<use href="#bell" transform="translate(1547.500 618)"/>
<text x="1603" y="633" font-size="12" textLength="119" lengthAdjust="spacingAndGlyphs">XAUUSD&#160;&#160;H4__空头趋势</text>
<path d="M1883.500 622V712" stroke="#fbfbfb" fill="none"/>
<path d="M1888 634L1892 628L1896 634zM1888 702L1896 702L1892 708z" fill="#b0b0b0"/>
<rect x="1541.500" y="720.700" width="358" height="120.600" fill="#fff" stroke="#a0a0a0" stroke-width="1.300"/>
<rect x="1881" y="722" width="18" height="118.500" fill="#f0f0f0"/>
<rect x="1888.500" y="739" width="2.300" height="17" fill="#9a9a9a"/>
<rect x="1543" y="722" width="338" height="20" fill="#e9e9e9"/>
<rect x="1543" y="762" width="338" height="20" fill="#e9e9e9"/>
<rect x="1543" y="802" width="338" height="20" fill="#e9e9e9"/>
<path d="M1543 742H1881M1543 762H1881M1543 782H1881M1543 802H1881M1543 822H1881" stroke="#c8c8c8" fill="none"/>
<path d="M1625.500 722V841" stroke="#c8c8c8" fill="none"/>
<use href="#bell" transform="translate(1546.500 725) scale(.36)"/>
<use href="#bell" transform="translate(1546.500 745) scale(.36)"/>
<use href="#bell" transform="translate(1546.500 765) scale(.36)"/>
<use href="#bell" transform="translate(1546.500 785) scale(.36)"/>
<use href="#bell" transform="translate(1546.500 805) scale(.36)"/>
<use href="#bell" transform="translate(1546.500 825) scale(.36)"/>
<g font-size="12">
<text x="1565.500" y="736.500" textLength="43.700" lengthAdjust="spacingAndGlyphs">12:05:47</text>
<text x="1565.500" y="756.500" textLength="43.700" lengthAdjust="spacingAndGlyphs">12:05:47</text>
<text x="1565.500" y="776.500" textLength="43.700" lengthAdjust="spacingAndGlyphs">12:05:47</text>
<text x="1565.500" y="796.500" textLength="43.700" lengthAdjust="spacingAndGlyphs">12:05:46</text>
<text x="1565.500" y="816.500" textLength="43.700" lengthAdjust="spacingAndGlyphs">12:05:46</text>
<text x="1565.500" y="836.500" textLength="43.700" lengthAdjust="spacingAndGlyphs">12:05:46</text>
<text x="1630" y="736.500" textLength="119" lengthAdjust="spacingAndGlyphs">XAUUSD&#160;&#160;H4__空头趋势</text>
<text x="1630" y="756.500" textLength="119" lengthAdjust="spacingAndGlyphs">XAUUSD&#160;&#160;H1__空头趋势</text>
<text x="1630" y="776.500" textLength="118" lengthAdjust="spacingAndGlyphs">XAUUSD&#160;&#160;日内空头趋势</text>
<text x="1630" y="796.500" textLength="119" lengthAdjust="spacingAndGlyphs">XAUUSD&#160;&#160;H4__空头趋势</text>
<text x="1630" y="816.500" textLength="119" lengthAdjust="spacingAndGlyphs">XAUUSD&#160;&#160;H1__空头趋势</text>
<text x="1630" y="836.500" textLength="118" lengthAdjust="spacingAndGlyphs">XAUUSD&#160;&#160;日内空头趋势</text>
</g>
<rect x="1684.500" y="852" width="72" height="20" rx="3" fill="#fff" stroke="#c8c8c8"/>
<text x="1720.500" y="866" font-size="12" text-anchor="middle">OK</text>
</svg>
</body></html>
